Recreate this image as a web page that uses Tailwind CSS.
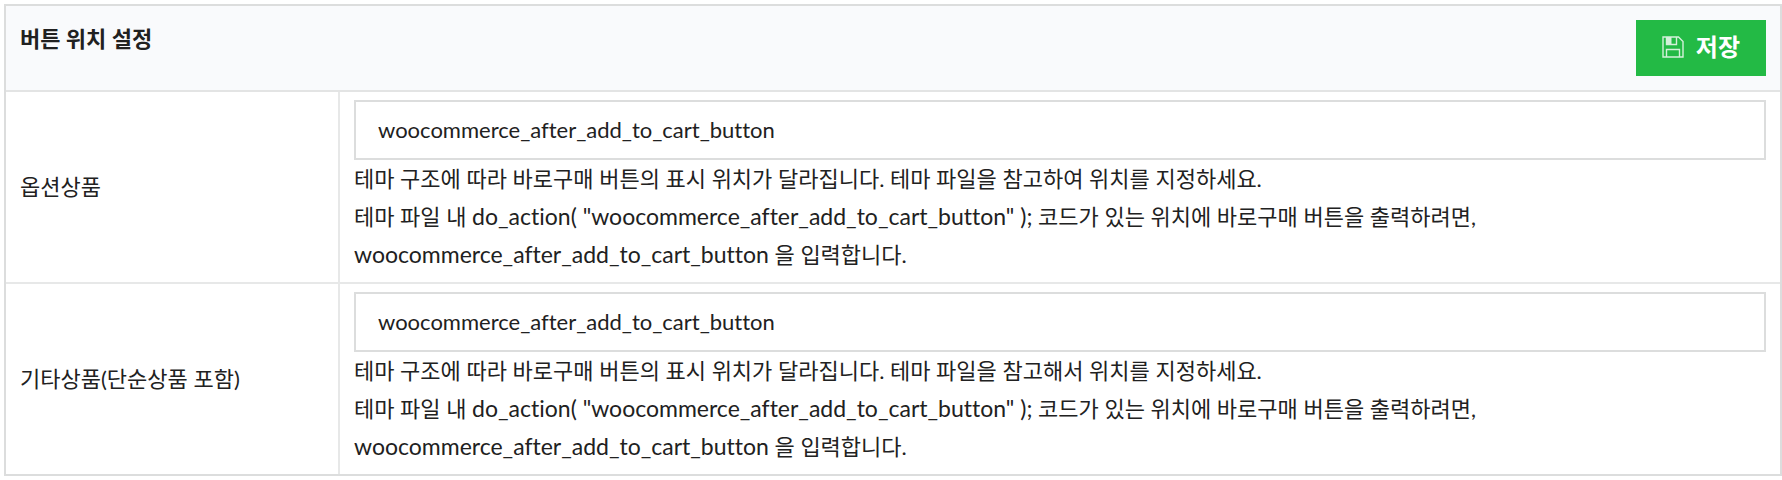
<!DOCTYPE html>
<html lang="ko">
<head>
<meta charset="utf-8">
<title>버튼 위치 설정</title>
<script src="https://cdn.jsdelivr.net/npm/@tailwindcss/browser@4"></script>
</head>
<body class="bg-white pt-1 pl-1 font-['Lato','Noto_Sans_CJK_KR',sans-serif] text-[22px] leading-[38px] text-[#212121] [font-variant-ligatures:none]">
<form class="border-2 border-[#dcdddd]">
  <header class="flex items-start justify-between border-b-2 border-[#e3e4e4] bg-[#f9fafc] p-[14px]">
    <h1 class="font-bold">버튼 위치 설정</h1>
    <button type="submit" class="flex h-14 items-center gap-3 bg-[#23ba45] px-[26px] pb-[2px] text-2xl font-bold text-white">
      <svg class="size-[22px] opacity-80" viewBox="0 0 22 22" fill="none" stroke="currentColor" stroke-width="1.4" aria-hidden="true">
        <path d="M1 1h15.500l4.500 4.500V21H1z"/>
        <path d="M4.500 21v-7.500h13V21M14.500 1v7.500h-10V1"/>
        <path d="M4.500 1h5v7.500h-5z" fill="currentColor" stroke="none"/>
      </svg>
      저장
    </button>
  </header>
  <table class="w-full border-separate border-spacing-0">
    <tbody>
      <tr>
        <th scope="row" class="w-[334px] border-r-2 border-b-2 border-[#e7e8e8] px-[14px] text-left font-normal"><label for="option">옵션상품</label></th>
        <td class="border-b-2 border-[#e7e8e8] px-[14px] py-2">
          <input id="option" type="text" value="woocommerce_after_add_to_cart_button" class="block h-[60px] w-full border-2 border-[#dcdddd] px-[22px] pb-[2px]">
          <p>테마 구조에 따라 바로구매 버튼의 표시 위치가 달라집니다. 테마 파일을 참고하여 위치를 지정하세요.<br>테마 파일 내 <span class="text-[23px] leading-none">do_action( "woocommerce_after_add_to_cart_button" );</span> 코드가 있는 위치에 바로구매 버튼을 출력하려면,<br><span class="text-[23px] leading-none">woocommerce_after_add_to_cart_button</span> 을 입력합니다.</p>
        </td>
      </tr>
      <tr>
        <th scope="row" class="border-r-2 border-[#e7e8e8] px-[14px] text-left font-normal"><label for="simple">기타상품(단순상품 포함)</label></th>
        <td class="px-[14px] py-2">
          <input id="simple" type="text" value="woocommerce_after_add_to_cart_button" class="block h-[60px] w-full border-2 border-[#dcdddd] px-[22px] pb-[2px]">
          <p>테마 구조에 따라 바로구매 버튼의 표시 위치가 달라집니다. 테마 파일을 참고해서 위치를 지정하세요.<br>테마 파일 내 <span class="text-[23px] leading-none">do_action( "woocommerce_after_add_to_cart_button" );</span> 코드가 있는 위치에 바로구매 버튼을 출력하려면,<br><span class="text-[23px] leading-none">woocommerce_after_add_to_cart_button</span> 을 입력합니다.</p>
        </td>
      </tr>
    </tbody>
  </table>
</form>
</body>
</html>
